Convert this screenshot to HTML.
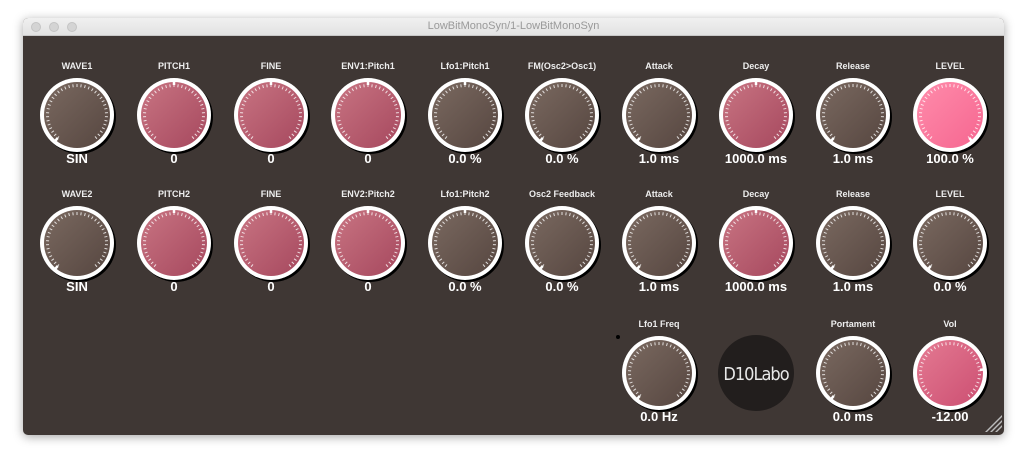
<!DOCTYPE html>
<html><head><meta charset="utf-8"><style>
body{margin:0;width:1027px;height:462px;background:#fff;overflow:hidden;font-family:"Liberation Sans",sans-serif}
#win{position:absolute;left:23px;top:18px;width:981px;height:417px;border-radius:5px;box-shadow:0 2px 10px rgba(0,0,0,.35);overflow:hidden;background:#3f3734}
#tb{height:17px;background:linear-gradient(#f0f0f0,#e2e2e2);border-bottom:1px solid #c8c8c8;text-align:center;font-size:11px;color:#9a9a9a;line-height:17px}
.dot{position:absolute;top:4px;width:10px;height:10px;border-radius:50%;background:#d4d4d4;border:1px solid #c4c4c4;box-sizing:border-box}
svg{position:absolute;left:0;top:0}
</style></head><body>
<div id="win"><div id="tb">LowBitMonoSyn/1-LowBitMonoSyn</div>
<div class="dot" style="left:8px"></div><div class="dot" style="left:26px"></div><div class="dot" style="left:44px"></div>
</div>
<svg id="s" width="1027" height="462" xmlns="http://www.w3.org/2000/svg">
<defs>
<linearGradient id="gb" x1="0" y1="0" x2="1" y2="1"><stop offset="0" stop-color="#7a6960"/><stop offset="1" stop-color="#564640"/></linearGradient>
<linearGradient id="gp" x1="0" y1="0" x2="1" y2="1"><stop offset="0" stop-color="#c87482"/><stop offset="1" stop-color="#a6485e"/></linearGradient>
<linearGradient id="gl" x1="0" y1="0" x2="1" y2="1"><stop offset="0" stop-color="#ff8cab"/><stop offset="1" stop-color="#f56690"/></linearGradient>
<linearGradient id="gv" x1="0" y1="0" x2="1" y2="1"><stop offset="0" stop-color="#e47a92"/><stop offset="1" stop-color="#cc4f72"/></linearGradient>
</defs>
<circle cx="618" cy="337" r="2" fill="#000"/>
<circle cx="756" cy="373" r="38" fill="#221e1d"/>
<text x="756" y="380" text-anchor="middle" font-size="18" fill="#e8e8e8" font-family="'DejaVu Sans Condensed','DejaVu Sans',sans-serif" font-weight="200" letter-spacing="-1">D10Labo</text>
<path d="M990 432 l12 -12 v2 l-10 10z M995 432 l7 -7 v2 l-5 5z M985 432 l17 -17 v2 l-15 15z" fill="#bbb"/>
</svg>
<script>
var s=document.getElementById('s'),ns='http://www.w3.org/2000/svg';
function el(t,a,txt){var e=document.createElementNS(ns,t);for(var k in a)e.setAttribute(k,a[k]);if(txt)e.textContent=txt;s.appendChild(e);return e;}
var xs=[77,174,271,368,465,562,659,756,853,950];
function knob(cx,cy,g,v,lab,val){
 if(lab)el('text',{x:cx,y:cy-46,'text-anchor':'middle','font-size':'9','font-weight':'bold',fill:'#eee'},lab);
 el('circle',{cx:cx+2,cy:cy+2,r:37,fill:'#000'});
 el('circle',{cx:cx,cy:cy,r:37,fill:'#fff'});
 el('circle',{cx:cx,cy:cy,r:33,fill:'url(#'+g+')'});
 var d='';
 for(var i=0;i<=36;i++){var a=(-140+280*i/36)*Math.PI/180;var sa=Math.sin(a),ca=-Math.cos(a);
  d+='M'+(cx+28*sa).toFixed(2)+' '+(cy+28*ca).toFixed(2)+'L'+(cx+31*sa).toFixed(2)+' '+(cy+31*ca).toFixed(2);}
 el('path',{d:d,stroke:'#fff','stroke-width':'1',opacity:'.8'});
 var a=(-140+280*v)*Math.PI/180,sa=Math.sin(a),ca=-Math.cos(a);
 el('line',{x1:cx+30*sa,y1:cy+30*ca,x2:cx+35*sa,y2:cy+35*ca,stroke:'#fff','stroke-width':'2.5'});
 el('text',{x:cx,y:cy+48,'text-anchor':'middle','font-size':'13','font-weight':'bold',fill:'#fff'},val);
}
var r1=[['WAVE1','SIN','gb',0],['PITCH1','0','gp',.5],['FINE','0','gp',.5],['ENV1:Pitch1','0','gp',.5],['Lfo1:Pitch1','0.0 %','gb',.5],['FM(Osc2>Osc1)','0.0 %','gb',0],['Attack','1.0 ms','gb',0],['Decay','1000.0 ms','gp',.5],['Release','1.0 ms','gb',0],['LEVEL','100.0 %','gl',1]];
var r2=[['WAVE2','SIN','gb',0],['PITCH2','0','gp',.5],['FINE','0','gp',.5],['ENV2:Pitch2','0','gp',.5],['Lfo1:Pitch2','0.0 %','gb',.5],['Osc2 Feedback','0.0 %','gb',0],['Attack','1.0 ms','gb',0],['Decay','1000.0 ms','gp',.5],['Release','1.0 ms','gb',0],['LEVEL','0.0 %','gb',0]];
r1.forEach(function(k,i){knob(xs[i],115,k[2],k[3],k[0],k[1]);});
r2.forEach(function(k,i){knob(xs[i],243,k[2],k[3],k[0],k[1]);});
knob(659,373,'gb',0,'Lfo1 Freq','0.0 Hz');
knob(853,373,'gb',0,'Portament','0.0 ms');
knob(950,373,'gv',.8,'Vol','-12.00');
</script>
</body></html>
